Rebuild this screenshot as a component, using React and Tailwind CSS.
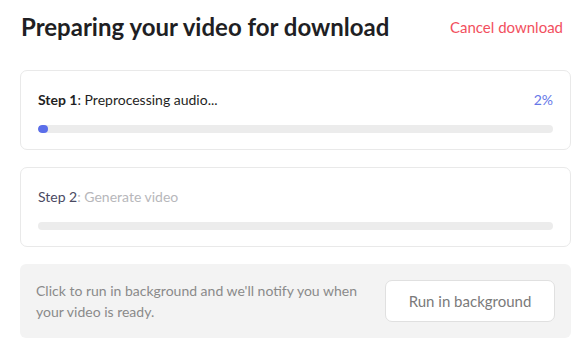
import React from "react";

const StepCard = ({ step, label, active = false, percent = 0 }) => {
  return (
    <div className="border border-[#e9e9e9] rounded-[7px] bg-white px-[17px] pt-[18px] pb-[16px]">
      <div className="flex items-center justify-between h-[20px] text-[14px]">
        <div>
          {active ? (
            <>
              <span className="font-bold text-[#1f1f24]">Step {step}</span>
              <span className="text-[#1f1f24]">: {label}</span>
            </>
          ) : (
            <>
              <span className="text-[#4a4a62]">Step {step}</span>
              <span className="text-[#b7b7bb]">: {label}</span>
            </>
          )}
        </div>
        {active && <span className="text-[#6577e8]">{percent}%</span>}
      </div>
      <div className="mt-[16px] h-[8px] rounded-full bg-[#ececec] overflow-hidden">
        {active && (
          <div className="h-full w-[10px] rounded-full bg-[#5b6eea]" />
        )}
      </div>
    </div>
  );
};

export default function App() {
  return (
    <div
      className="w-[581px] h-[340px] bg-white pl-[20px] pr-[10px] pt-[12px] overflow-hidden"
      style={{ fontFamily: "Lato, 'Open Sans', sans-serif" }}
    >
      {/* Header */}
      <div className="flex items-center justify-between h-[30px] mb-[28px]">
        <h1 className="text-[24px] font-bold text-[#1f1f24] pl-[1px]">
          Preparing your video for download
        </h1>
        <button className="text-[15px] text-[#f2505e] pr-[8px]">Cancel download</button>
      </div>

      <div className="flex flex-col gap-[17px]">
        <StepCard step={1} label="Preprocessing audio..." active percent={2} />
        <StepCard step={2} label="Generate video" />

        {/* Background option */}
        <div className="bg-[#f3f3f3] rounded-[6px] flex items-center justify-between pl-[16px] pr-[16px] h-[74px]">
          <p className="text-[14px] leading-[21px] text-[#8a8a8a] w-[330px]">
            Click to run in background and we'll notify you when your video is ready.
          </p>
          <button className="h-[42px] w-[170px] bg-white border border-[#e0e0e0] rounded-[7px] text-[15px] text-[#7a7a7a]">
            Run in background
          </button>
        </div>
      </div>
    </div>
  );
}
